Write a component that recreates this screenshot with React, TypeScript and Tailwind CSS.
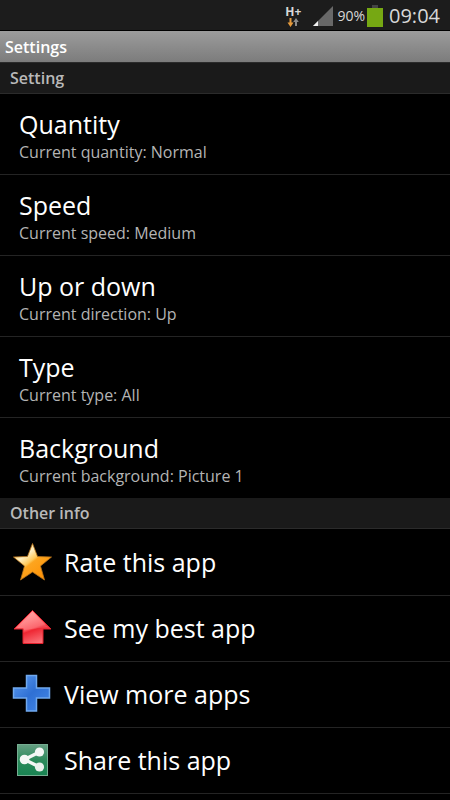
import type { ReactNode } from 'react'

const preferences = [
  { title: 'Quantity', summary: 'Current quantity: Normal' },
  { title: 'Speed', summary: 'Current speed: Medium' },
  { title: 'Up or down', summary: 'Current direction: Up' },
  { title: 'Type', summary: 'Current type: All' },
  { title: 'Background', summary: 'Current background: Picture 1' },
]

const links = [
  { title: 'Rate this app', icon: <StarIcon /> },
  { title: 'See my best app', icon: <ArrowIcon /> },
  { title: 'View more apps', icon: <PlusIcon /> },
  { title: 'Share this app', icon: <ShareIcon /> },
]

function StarIcon() {
  return (
    <svg viewBox="0 0 40 40" className="h-10 w-10" aria-hidden="true">
      <defs>
        <linearGradient id="star" x1="0.1" y1="0.1" x2="0.75" y2="0.9">
          <stop offset="0" stopColor="#ffc24a" />
          <stop offset="0.3" stopColor="#fff0c4" />
          <stop offset="0.5" stopColor="#ffc95a" />
          <stop offset="0.56" stopColor="#fda51f" />
          <stop offset="1" stopColor="#ff9408" />
        </linearGradient>
      </defs>
      <path
        d="M20.5 1.5 L25.5 14.5 L39.5 15 L28.5 24 L32.5 38 L20.5 30 L8.5 38 L12.5 24 L1.5 15 L15.5 14.5 Z"
        fill="url(#star)"
        stroke="#b8741c"
        strokeWidth="0.8"
        strokeLinejoin="round"
      />
    </svg>
  )
}

function ArrowIcon() {
  return (
    <svg viewBox="0 0 40 40" className="h-10 w-10" aria-hidden="true">
      <defs>
        <linearGradient id="arrow" x1="0.2" y1="0" x2="0.6" y2="1">
          <stop offset="0" stopColor="#ffa5a5" />
          <stop offset="0.35" stopColor="#ff7477" />
          <stop offset="0.56" stopColor="#fb5058" />
          <stop offset="0.62" stopColor="#ef2733" />
          <stop offset="1" stopColor="#fb7178" />
        </linearGradient>
      </defs>
      <path
        d="M20.5 2.5 L39 21 H31 V35.5 H11 V21 H2 Z"
        fill="url(#arrow)"
        stroke="#e4202c"
        strokeWidth="1"
        strokeLinejoin="round"
      />
      <path d="M12 34 V22 L20 21 L36 19 L20.5 4.5 L5 20 H12" fill="#fff" opacity="0.14" />
    </svg>
  )
}

function PlusIcon() {
  return (
    <svg viewBox="0 0 40 40" className="h-10 w-10" aria-hidden="true">
      <defs>
        <linearGradient id="plus" x1="0" y1="0" x2="1" y2="1">
          <stop offset="0" stopColor="#5e9df0" />
          <stop offset="0.5" stopColor="#2f70d4" />
          <stop offset="1" stopColor="#4488e8" />
        </linearGradient>
      </defs>
      <path
        d="M14.5 1.5 H24.5 V14 H37.5 V24 H24.5 V37 H14.5 V24 H1.5 V14 H14.5 Z"
        fill="url(#plus)"
        stroke="#70a9ee"
        strokeWidth="1.5"
      />
    </svg>
  )
}

function ShareIcon() {
  return (
    <svg viewBox="0 0 40 40" className="h-10 w-10" aria-hidden="true">
      <defs>
        <linearGradient id="share" x1="0" y1="0" x2="0" y2="1">
          <stop offset="0" stopColor="#669f83" />
          <stop offset="0.5" stopColor="#2c8a5b" />
          <stop offset="1" stopColor="#188352" />
        </linearGradient>
      </defs>
      <rect x="5.5" y="4.5" width="30" height="31" fill="url(#share)" stroke="#75ad91" />
      <path d="M27.5 12 L12.5 19.5 L27.5 27" fill="none" stroke="#f4f7f5" strokeWidth="3.4" />
      <circle cx="27.5" cy="12" r="4.6" fill="#f4f7f5" />
      <circle cx="12.5" cy="19.5" r="4.8" fill="#f4f7f5" />
      <circle cx="27.5" cy="27" r="4.6" fill="#e9f0ec" />
    </svg>
  )
}

function StatusBar() {
  return (
    <div className="flex h-[31px] items-center justify-end border-b border-black bg-[#1c1c1c] pt-0.5 pr-[10px] text-[#d8d8d8]">
      <div className="mr-3 flex flex-col items-center">
        <span className="text-xs leading-[13px] font-bold">H+</span>
        <svg viewBox="0 0 12 9" className="h-[9px] w-3" aria-hidden="true">
          <path d="M2.5 0 H4.5 V4.5 H6.5 L3.5 9 L0.5 4.5 H2.5 Z" fill="#e59a3c" />
          <path d="M8 8 V4 H6.2 L9 0 L11.8 4 H10 V8 Z" fill="#8b8b8b" />
        </svg>
      </div>
      <svg viewBox="0 0 20 20" className="mr-1 h-5 w-5" aria-hidden="true">
        <path d="M20 0 V20 H0 Z" fill="#686868" />
        <path d="M5 15 V20 H0 Z" fill="#f2f2f2" />
      </svg>
      <span className="mr-0.5 text-sm">90%</span>
      <svg viewBox="0 0 16 22" className="mr-1.5 h-[22px] w-4" aria-hidden="true">
        <rect x="5" y="0" width="6" height="4" fill="#444" />
        <rect x="0" y="3" width="16" height="19" fill="#76a813" />
      </svg>
      <time className="text-xl">09:04</time>
    </div>
  )
}

function CategoryHeader({ children }: { children: ReactNode }) {
  return (
    <h2 className="flex h-[31px] items-center border-b border-[#2b2b2b] bg-[#1a1a1a] px-[10px] text-base font-semibold text-[#b9b9b9]">
      {children}
    </h2>
  )
}

export default function App() {
  return (
    <div className="min-h-screen bg-black font-['Open_Sans',sans-serif] text-white">
      <StatusBar />
      <header className="flex h-8 items-center border-b border-[#2b2b2b] bg-linear-to-b from-[#9c9c9c] to-[#7c7c7c] px-[5px]">
        <h1 className="text-base font-semibold">Settings</h1>
      </header>

      <main>
        <CategoryHeader>Setting</CategoryHeader>
        <ul className="divide-y divide-[#242424]">
          {preferences.map((item) => (
            <li key={item.title}>
              <button type="button" className="flex h-20 w-full flex-col justify-center px-[19px] pt-1 text-left">
                <span className="text-[25px] leading-8">{item.title}</span>
                <span className="text-base text-[#b4b4b4]">{item.summary}</span>
              </button>
            </li>
          ))}
        </ul>

        <CategoryHeader>Other info</CategoryHeader>
        <ul className="pt-px">
          {links.map((item) => (
            <li key={item.title} className="border-b border-[#242424]">
              <button type="button" className="flex h-[65px] w-full items-center gap-3 px-3 pb-0.5 text-left">
                {item.icon}
                <span className="text-[25px] leading-8">{item.title}</span>
              </button>
            </li>
          ))}
        </ul>
      </main>
    </div>
  )
}
